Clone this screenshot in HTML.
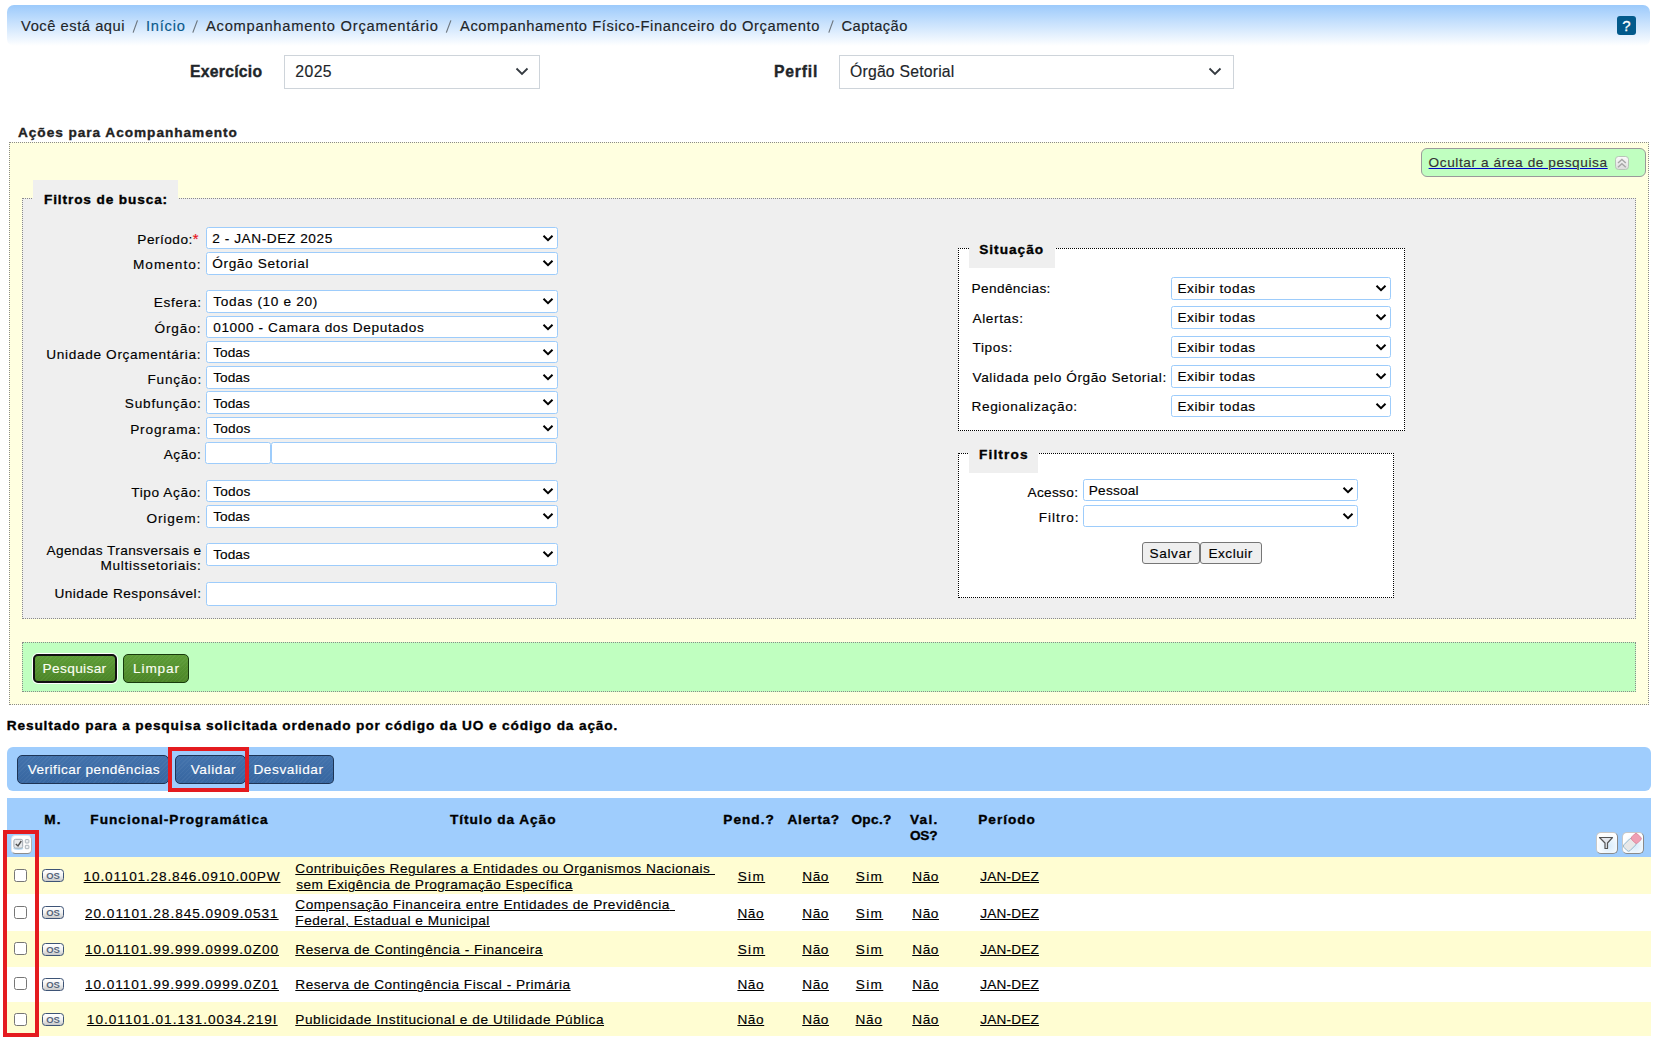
<!DOCTYPE html>
<html><head><meta charset="utf-8"><title>Captação</title>
<style>
svg{display:block}
html,body{margin:0;padding:0;width:1660px;height:1043px;overflow:hidden;background:#fff;font-family:"Liberation Sans",sans-serif}
.t{position:absolute;white-space:pre;line-height:1;font-family:"Liberation Sans",sans-serif;z-index:5}
.ul{position:absolute;height:1px;z-index:5}
.b{position:absolute;box-sizing:border-box}
.sel{position:absolute;box-sizing:border-box;background:#fff;border:1px solid #9dccfb;border-radius:2.5px}
.sel svg{position:absolute;right:4px;top:7px}
.fs{position:absolute;box-sizing:border-box;border:1px dotted #8a8a8a}
.cb{position:absolute;box-sizing:border-box;width:13px;height:13px;border:1px solid #767676;border-radius:2.5px;background:#fff;left:14px}
.os{position:absolute;box-sizing:border-box;width:22px;height:13px;left:42px;border:1px solid #3e5476;border-radius:3.5px;background:linear-gradient(#fff 0%,#f2f2f2 50%,#c9c9c9 100%);font:bold 9.5px/11px "Liberation Sans",sans-serif;color:#56657a;text-align:center;letter-spacing:0px}
.bbtn{position:absolute;box-sizing:border-box;border:1px solid #1d3455;border-radius:5px;background:repeating-linear-gradient(135deg,rgba(255,255,255,.04) 0 1px,rgba(0,0,0,0) 1px 3px),linear-gradient(#4373ad,#3766a0)}
.gbtn{position:absolute;box-sizing:border-box;border-radius:5px;background:repeating-linear-gradient(135deg,rgba(255,255,255,.04) 0 1px,rgba(0,0,0,0) 1px 3px),linear-gradient(#5e9e38,#4b8527)}
.wbtn{position:absolute;box-sizing:border-box;height:22px;top:542px;border:1px solid #767676;border-radius:3px;background:#efefef}
.row{position:absolute;left:7px;width:1644px}

</style></head><body>
<div class=b style='left:7px;top:5px;width:1643px;height:41px;border-radius:7px;background:linear-gradient(#9ccafb,#ffffff)'></div>
<svg style='position:absolute;left:0;top:0;z-index:5' width='900' height='40'><line x1='133.10000000000002' y1='32.6' x2='137.5' y2='20.4' stroke='#6c757d' stroke-width='1.15'/><line x1='192.8' y1='32.6' x2='197.39999999999998' y2='20.4' stroke='#6c757d' stroke-width='1.15'/><line x1='446.3' y1='32.6' x2='450.9' y2='20.4' stroke='#6c757d' stroke-width='1.15'/><line x1='828.8' y1='32.6' x2='833.2' y2='20.4' stroke='#6c757d' stroke-width='1.15'/></svg>
<div class=b style='left:1617px;top:16px;width:19px;height:19px;border-radius:3px;background:#035a8b;color:#fff;font:normal 15px/20px "Liberation Sans",sans-serif;text-align:center;-webkit-text-stroke:0.3px #fff'>?</div>
<div class=b style='left:284px;top:55px;width:256px;height:34px;border:1px solid #ced4da;background:#fff'><div style='position:absolute;left:230px;top:11px'><svg width='14' height='9' viewBox='0 0 14 9'><polyline points='1.5,1.5 7,7 12.5,1.5' fill='none' stroke='#343a40' stroke-width='1.8'/></svg></div></div>
<div class=b style='left:839px;top:55px;width:395px;height:34px;border:1px solid #ced4da;background:#fff'><div style='position:absolute;left:368px;top:11px'><svg width='14' height='9' viewBox='0 0 14 9'><polyline points='1.5,1.5 7,7 12.5,1.5' fill='none' stroke='#343a40' stroke-width='1.8'/></svg></div></div>
<div class=fs style='left:9px;top:142px;width:1640px;height:563px;background:#ffffe0'></div>
<div class=b style='left:1421px;top:148px;width:225px;height:29px;border:1px solid #9a9a9a;border-radius:6px;background:#c0ffc0'></div>
<div class=b style='left:1615px;top:156px;width:14px;height:14px;border:1px solid #b8c4b8;border-radius:3.5px;background:linear-gradient(#fafafa,#dcdcdc)'><svg width='12' height='12' viewBox='0 0 12 12' style='position:absolute;left:0;top:0'><polyline points='2,6 5.9,2.4 9.8,6' fill='none' stroke='#a6a6a6' stroke-width='1.4'/><polyline points='2,10.3 5.9,6.7 9.8,10.3' fill='none' stroke='#a6a6a6' stroke-width='1.4'/></svg></div>
<div class=fs style='left:22px;top:198px;width:1614px;height:421px;background:#efefef'></div>
<div class=b style='left:33px;top:180px;width:145px;height:25px;background:#efefef'></div>
<div class=sel style='left:206px;top:227px;width:352px;height:22px'><svg width='12' height='8' viewBox='-1 -1 12 8' style='position:absolute;left:335px;top:6px'><polyline points='0.5,0.8 5,5.2 9.5,0.8' fill='none' stroke='#000' stroke-width='2'/></svg></div>
<div class=sel style='left:206px;top:252px;width:352px;height:23px'><svg width='12' height='8' viewBox='-1 -1 12 8' style='position:absolute;left:335px;top:6px'><polyline points='0.5,0.8 5,5.2 9.5,0.8' fill='none' stroke='#000' stroke-width='2'/></svg></div>
<div class=sel style='left:206px;top:290px;width:352px;height:23px'><svg width='12' height='8' viewBox='-1 -1 12 8' style='position:absolute;left:335px;top:6px'><polyline points='0.5,0.8 5,5.2 9.5,0.8' fill='none' stroke='#000' stroke-width='2'/></svg></div>
<div class=sel style='left:206px;top:316px;width:352px;height:22px'><svg width='12' height='8' viewBox='-1 -1 12 8' style='position:absolute;left:335px;top:6px'><polyline points='0.5,0.8 5,5.2 9.5,0.8' fill='none' stroke='#000' stroke-width='2'/></svg></div>
<div class=sel style='left:206px;top:341px;width:352px;height:22px'><svg width='12' height='8' viewBox='-1 -1 12 8' style='position:absolute;left:335px;top:6px'><polyline points='0.5,0.8 5,5.2 9.5,0.8' fill='none' stroke='#000' stroke-width='2'/></svg></div>
<div class=sel style='left:206px;top:366px;width:352px;height:23px'><svg width='12' height='8' viewBox='-1 -1 12 8' style='position:absolute;left:335px;top:6px'><polyline points='0.5,0.8 5,5.2 9.5,0.8' fill='none' stroke='#000' stroke-width='2'/></svg></div>
<div class=sel style='left:206px;top:391px;width:352px;height:23px'><svg width='12' height='8' viewBox='-1 -1 12 8' style='position:absolute;left:335px;top:6px'><polyline points='0.5,0.8 5,5.2 9.5,0.8' fill='none' stroke='#000' stroke-width='2'/></svg></div>
<div class=sel style='left:206px;top:417px;width:352px;height:22px'><svg width='12' height='8' viewBox='-1 -1 12 8' style='position:absolute;left:335px;top:6px'><polyline points='0.5,0.8 5,5.2 9.5,0.8' fill='none' stroke='#000' stroke-width='2'/></svg></div>
<div class=sel style='left:206px;top:480px;width:352px;height:22px'><svg width='12' height='8' viewBox='-1 -1 12 8' style='position:absolute;left:335px;top:6px'><polyline points='0.5,0.8 5,5.2 9.5,0.8' fill='none' stroke='#000' stroke-width='2'/></svg></div>
<div class=sel style='left:206px;top:505px;width:352px;height:23px'><svg width='12' height='8' viewBox='-1 -1 12 8' style='position:absolute;left:335px;top:6px'><polyline points='0.5,0.8 5,5.2 9.5,0.8' fill='none' stroke='#000' stroke-width='2'/></svg></div>
<div class=sel style='left:206px;top:543px;width:352px;height:23px'><svg width='12' height='8' viewBox='-1 -1 12 8' style='position:absolute;left:335px;top:6px'><polyline points='0.5,0.8 5,5.2 9.5,0.8' fill='none' stroke='#000' stroke-width='2'/></svg></div>
<div class=sel style='left:205px;top:442px;width:66px;height:22px'></div>
<div class=sel style='left:271px;top:442px;width:286px;height:22px'></div>
<div class=sel style='left:206px;top:582px;width:351px;height:24px'></div>
<div class=fs style='left:958px;top:248px;width:447px;height:183px;background:#fff;border-color:#000'></div>
<div class=b style='left:969px;top:238px;width:86px;height:30px;background:#efefef'></div>
<div class=sel style='left:1171px;top:277px;width:220px;height:23px'><svg width='12' height='8' viewBox='-1 -1 12 8' style='position:absolute;left:203px;top:6px'><polyline points='0.5,0.8 5,5.2 9.5,0.8' fill='none' stroke='#000' stroke-width='2'/></svg></div>
<div class=sel style='left:1171px;top:306px;width:220px;height:23px'><svg width='12' height='8' viewBox='-1 -1 12 8' style='position:absolute;left:203px;top:6px'><polyline points='0.5,0.8 5,5.2 9.5,0.8' fill='none' stroke='#000' stroke-width='2'/></svg></div>
<div class=sel style='left:1171px;top:336px;width:220px;height:22px'><svg width='12' height='8' viewBox='-1 -1 12 8' style='position:absolute;left:203px;top:6px'><polyline points='0.5,0.8 5,5.2 9.5,0.8' fill='none' stroke='#000' stroke-width='2'/></svg></div>
<div class=sel style='left:1171px;top:365px;width:220px;height:23px'><svg width='12' height='8' viewBox='-1 -1 12 8' style='position:absolute;left:203px;top:6px'><polyline points='0.5,0.8 5,5.2 9.5,0.8' fill='none' stroke='#000' stroke-width='2'/></svg></div>
<div class=sel style='left:1171px;top:395px;width:220px;height:22px'><svg width='12' height='8' viewBox='-1 -1 12 8' style='position:absolute;left:203px;top:6px'><polyline points='0.5,0.8 5,5.2 9.5,0.8' fill='none' stroke='#000' stroke-width='2'/></svg></div>
<div class=fs style='left:958px;top:453px;width:436px;height:145px;background:#fff;border-color:#000'></div>
<div class=b style='left:969px;top:443px;width:69px;height:30px;background:#efefef'></div>
<div class=sel style='left:1083px;top:479px;width:275px;height:22px'><svg width='12' height='8' viewBox='-1 -1 12 8' style='position:absolute;left:258px;top:6px'><polyline points='0.5,0.8 5,5.2 9.5,0.8' fill='none' stroke='#000' stroke-width='2'/></svg></div>
<div class=sel style='left:1083px;top:505px;width:275px;height:22px'><svg width='12' height='8' viewBox='-1 -1 12 8' style='position:absolute;left:258px;top:6px'><polyline points='0.5,0.8 5,5.2 9.5,0.8' fill='none' stroke='#000' stroke-width='2'/></svg></div>
<div class=wbtn style='left:1142px;width:58px'></div>
<div class=wbtn style='left:1200px;width:62px'></div>
<div class=fs style='left:22px;top:642px;width:1614px;height:50px;background:#c0ffc0'></div>
<div class=gbtn style='left:33px;top:654px;width:84px;height:29px;border:2px solid #111;box-shadow:0 0 0 1px #fff'></div>
<div class=gbtn style='left:123px;top:654px;width:66px;height:29px;border:1px solid #173a0c'></div>
<div class=b style='left:7px;top:747px;width:1644px;height:44px;border-radius:6px;background:#9fcdfd'></div>
<div class=bbtn style='left:17px;top:755px;width:152px;height:29px'></div>
<div class=bbtn style='left:175px;top:755px;width:71px;height:29px'></div>
<div class=bbtn style='left:245px;top:755px;width:89px;height:29px;border-left:none;border-top-left-radius:0;border-bottom-left-radius:0'></div>
<div class=b style='left:168px;top:747px;width:81px;height:45px;border:4px solid #e41b1f;z-index:6'></div>
<div class=b style='left:7px;top:798px;width:1644px;height:59px;background:#9fcdfd'></div>
<div class=row style='top:857px;height:36.7px;background:#fffdd2'></div>
<div class=row style='top:893.7px;height:37.3px;background:#ffffff'></div>
<div class=row style='top:931px;height:35.7px;background:#fffdd2'></div>
<div class=row style='top:966.7px;height:35.1px;background:#ffffff'></div>
<div class=row style='top:1001.8px;height:34.7px;background:#fffdd2'></div>
<div class=cb style='top:868.7px'></div>
<div class=cb style='top:905.7px'></div>
<div class=cb style='top:942px'></div>
<div class=cb style='top:977px'></div>
<div class=cb style='top:1012.7px'></div>
<div class=os style='top:869px'>OS</div>
<div class=os style='top:906px'>OS</div>
<div class=os style='top:942.5px'>OS</div>
<div class=os style='top:977.5px'>OS</div>
<div class=os style='top:1013px'>OS</div>
<div class=b style='left:3px;top:830px;width:36px;height:207px;border:4px solid #e41b1f;z-index:6'></div>
<div class=b style='left:10.5px;top:834.5px;width:21px;height:19px;border-radius:4.5px;background:#fff;border:1px solid #e2e6ea;border-bottom:1.5px solid #8d8d8d;border-right-color:#b0b0b0'><svg width='19' height='17' viewBox='0 0 19 17' style='position:absolute;left:0;top:0'><ellipse cx='6.3' cy='12.3' rx='5' ry='1.6' fill='#bcdcf4'/><rect x='1.9' y='3.3' width='8.8' height='8.8' rx='1.6' fill='#e6e9ec' stroke='#a3abb2' stroke-width='1'/><polyline points='3.8,8 6,10 9.3,5' fill='none' stroke='#505050' stroke-width='1.4'/><rect x='13.3' y='3.6' width='3.6' height='3.4' rx='0.6' fill='#eef1f4' stroke='#a3abb2' stroke-width='0.9'/><rect x='13.3' y='9.3' width='3.6' height='3.4' rx='0.6' fill='#eef1f4' stroke='#a3abb2' stroke-width='0.9'/></svg></div>
<div class=b style='left:1596px;top:832px;width:21.5px;height:21.5px;border-radius:5px;background:radial-gradient(circle at 60% 65%,#d8ecfb,#fff 70%);border:1px solid #c8c8c8;border-right-color:#8a8a8a;border-bottom-color:#8a8a8a'><svg width='19' height='19' viewBox='0 0 19 19' style='position:absolute;left:0;top:0'><path d='M2.5 4.5 H15.5 L10.5 10 V15.5 H8 V10 Z' fill='#e4e8ee' stroke='#555' stroke-width='1.2' stroke-linejoin='round'/></svg></div>
<div class=b style='left:1622px;top:832px;width:21.5px;height:21.5px;border-radius:5px;background:radial-gradient(circle at 60% 65%,#d8ecfb,#fff 70%);border:1px solid #c8c8c8;border-right-color:#8a8a8a;border-bottom-color:#8a8a8a'><svg width='19' height='19' viewBox='0 0 19 19' style='position:absolute;left:0;top:0'><g transform='rotate(-45 9.5 9.5)'><rect x='0' y='5' width='12' height='8.5' rx='2' fill='#e8e8e8' stroke='#8fb4cc' stroke-width='0.9'/><rect x='11' y='5' width='8' height='8.5' rx='2' fill='#ef9fb3' stroke='#d9839a' stroke-width='0.8'/></g></svg></div>
<span class=t style='left:21.10px;top:19px;font-size:14.7px;font-weight:400;letter-spacing:0.546px;color:#212529;-webkit-text-stroke:0.15px #212529'>Você está aqui</span>
<span class=t style='left:146.00px;top:19px;font-size:14.7px;font-weight:400;letter-spacing:0.740px;color:#0a5a8c;-webkit-text-stroke:0.15px #0a5a8c'>Início</span>
<span class=t style='left:206.00px;top:19px;font-size:14.7px;font-weight:400;letter-spacing:0.754px;color:#212529;-webkit-text-stroke:0.15px #212529'>Acompanhamento Orçamentário</span>
<span class=t style='left:460.00px;top:19px;font-size:14.7px;font-weight:400;letter-spacing:0.600px;color:#212529;-webkit-text-stroke:0.15px #212529'>Acompanhamento Físico-Financeiro do Orçamento</span>
<span class=t style='left:841.50px;top:19px;font-size:14.7px;font-weight:400;letter-spacing:0.429px;color:#212529;-webkit-text-stroke:0.15px #212529'>Captação</span>
<span class=t style='left:190.00px;top:64px;font-size:15.75px;font-weight:700;letter-spacing:0.250px;color:#212529;-webkit-text-stroke:0.35px #212529'>Exercício</span>
<span class=t style='left:295.30px;top:64px;font-size:15.75px;font-weight:400;letter-spacing:0.433px;color:#212529;-webkit-text-stroke:0.15px #212529'>2025</span>
<span class=t style='left:774.00px;top:64px;font-size:15.75px;font-weight:700;letter-spacing:0.800px;color:#212529;-webkit-text-stroke:0.35px #212529'>Perfil</span>
<span class=t style='left:850.00px;top:64px;font-size:15.75px;font-weight:400;letter-spacing:0.215px;color:#212529;-webkit-text-stroke:0.15px #212529'>Órgão Setorial</span>
<span class=t style='left:18.00px;top:126px;font-size:13.65px;font-weight:700;letter-spacing:0.958px;color:#222;-webkit-text-stroke:0.35px #222'>Ações para Acompanhamento</span>
<span class=t style='left:1428.60px;top:156px;font-size:13.65px;font-weight:400;letter-spacing:0.588px;color:#333;-webkit-text-stroke:0.15px #333;text-decoration:underline;text-decoration-color:#0000cc;text-underline-offset:1px;text-decoration-thickness:1px'>Ocultar a área de pesquisa</span>
<span class=t style='left:44.00px;top:193px;font-size:13.65px;font-weight:700;letter-spacing:0.875px;color:#000;-webkit-text-stroke:0.35px #000'>Filtros de busca:</span>
<span class=t style='left:137.30px;top:233px;font-size:13.65px;font-weight:400;letter-spacing:0.486px;color:#000;-webkit-text-stroke:0.15px #000'>Período:</span>
<span class=t style='left:133.00px;top:258px;font-size:13.65px;font-weight:400;letter-spacing:0.986px;color:#000;-webkit-text-stroke:0.15px #000'>Momento:</span>
<span class=t style='left:153.70px;top:296px;font-size:13.65px;font-weight:400;letter-spacing:0.700px;color:#000;-webkit-text-stroke:0.15px #000'>Esfera:</span>
<span class=t style='left:154.40px;top:322px;font-size:13.65px;font-weight:400;letter-spacing:0.900px;color:#000;-webkit-text-stroke:0.15px #000'>Órgão:</span>
<span class=t style='left:46.20px;top:348px;font-size:13.65px;font-weight:400;letter-spacing:0.665px;color:#000;-webkit-text-stroke:0.15px #000'>Unidade Orçamentária:</span>
<span class=t style='left:147.50px;top:373px;font-size:13.65px;font-weight:400;letter-spacing:0.733px;color:#000;-webkit-text-stroke:0.15px #000'>Função:</span>
<span class=t style='left:124.80px;top:397px;font-size:13.65px;font-weight:400;letter-spacing:0.789px;color:#000;-webkit-text-stroke:0.15px #000'>Subfunção:</span>
<span class=t style='left:130.20px;top:423px;font-size:13.65px;font-weight:400;letter-spacing:0.838px;color:#000;-webkit-text-stroke:0.15px #000'>Programa:</span>
<span class=t style='left:163.70px;top:448px;font-size:13.65px;font-weight:400;letter-spacing:0.550px;color:#000;-webkit-text-stroke:0.15px #000'>Ação:</span>
<span class=t style='left:131.30px;top:486px;font-size:13.65px;font-weight:400;letter-spacing:0.600px;color:#000;-webkit-text-stroke:0.15px #000'>Tipo Ação:</span>
<span class=t style='left:146.40px;top:512px;font-size:13.65px;font-weight:400;letter-spacing:0.883px;color:#000;-webkit-text-stroke:0.15px #000'>Origem:</span>
<span class=t style='left:46.40px;top:544px;font-size:13.65px;font-weight:400;letter-spacing:0.400px;color:#000;-webkit-text-stroke:0.15px #000'>Agendas Transversais e</span>
<span class=t style='left:100.50px;top:559px;font-size:13.65px;font-weight:400;letter-spacing:0.680px;color:#000;-webkit-text-stroke:0.15px #000'>Multissetoriais:</span>
<span class=t style='left:54.40px;top:587px;font-size:13.65px;font-weight:400;letter-spacing:0.489px;color:#000;-webkit-text-stroke:0.15px #000'>Unidade Responsável:</span>
<span class=t style='left:192.70px;top:232px;font-size:14.7px;font-weight:400;letter-spacing:0.661px;color:#e8141c;-webkit-text-stroke:0.15px #e8141c'>*</span>
<span class=t style='left:212.20px;top:232px;font-size:13.65px;font-weight:400;letter-spacing:0.573px;color:#000;-webkit-text-stroke:0.15px #000'>2 - JAN-DEZ 2025</span>
<span class=t style='left:212.20px;top:257px;font-size:13.65px;font-weight:400;letter-spacing:0.646px;color:#000;-webkit-text-stroke:0.15px #000'>Órgão Setorial</span>
<span class=t style='left:213.20px;top:295px;font-size:13.65px;font-weight:400;letter-spacing:0.671px;color:#000;-webkit-text-stroke:0.15px #000'>Todas (10 e 20)</span>
<span class=t style='left:213.20px;top:321px;font-size:13.65px;font-weight:400;letter-spacing:0.607px;color:#000;-webkit-text-stroke:0.15px #000'>01000 - Camara dos Deputados</span>
<span class=t style='left:213.20px;top:346px;font-size:13.65px;font-weight:400;letter-spacing:0.050px;color:#000;-webkit-text-stroke:0.15px #000'>Todas</span>
<span class=t style='left:213.20px;top:371px;font-size:13.65px;font-weight:400;letter-spacing:0.050px;color:#000;-webkit-text-stroke:0.15px #000'>Todas</span>
<span class=t style='left:213.20px;top:397px;font-size:13.65px;font-weight:400;letter-spacing:0.050px;color:#000;-webkit-text-stroke:0.15px #000'>Todas</span>
<span class=t style='left:213.20px;top:422px;font-size:13.65px;font-weight:400;letter-spacing:0.200px;color:#000;-webkit-text-stroke:0.15px #000'>Todos</span>
<span class=t style='left:213.20px;top:485px;font-size:13.65px;font-weight:400;letter-spacing:0.200px;color:#000;-webkit-text-stroke:0.15px #000'>Todos</span>
<span class=t style='left:213.20px;top:510px;font-size:13.65px;font-weight:400;letter-spacing:0.050px;color:#000;-webkit-text-stroke:0.15px #000'>Todas</span>
<span class=t style='left:213.20px;top:548px;font-size:13.65px;font-weight:400;letter-spacing:0.050px;color:#000;-webkit-text-stroke:0.15px #000'>Todas</span>
<span class=t style='left:979.20px;top:243px;font-size:13.65px;font-weight:700;letter-spacing:1.014px;color:#000;-webkit-text-stroke:0.35px #000'>Situação</span>
<span class=t style='left:971.50px;top:282px;font-size:13.65px;font-weight:400;letter-spacing:0.380px;color:#000;-webkit-text-stroke:0.15px #000'>Pendências:</span>
<span class=t style='left:972.50px;top:312px;font-size:13.65px;font-weight:400;letter-spacing:0.614px;color:#000;-webkit-text-stroke:0.15px #000'>Alertas:</span>
<span class=t style='left:972.50px;top:341px;font-size:13.65px;font-weight:400;letter-spacing:0.614px;color:#000;-webkit-text-stroke:0.15px #000'>Tipos:</span>
<span class=t style='left:972.50px;top:371px;font-size:13.65px;font-weight:400;letter-spacing:0.589px;color:#000;-webkit-text-stroke:0.15px #000'>Validada pelo Órgão Setorial:</span>
<span class=t style='left:971.50px;top:400px;font-size:13.65px;font-weight:400;letter-spacing:0.614px;color:#000;-webkit-text-stroke:0.15px #000'>Regionalização:</span>
<span class=t style='left:1177.40px;top:282px;font-size:13.65px;font-weight:400;letter-spacing:0.591px;color:#000;-webkit-text-stroke:0.15px #000'>Exibir todas</span>
<span class=t style='left:1177.40px;top:311px;font-size:13.65px;font-weight:400;letter-spacing:0.591px;color:#000;-webkit-text-stroke:0.15px #000'>Exibir todas</span>
<span class=t style='left:1177.40px;top:341px;font-size:13.65px;font-weight:400;letter-spacing:0.591px;color:#000;-webkit-text-stroke:0.15px #000'>Exibir todas</span>
<span class=t style='left:1177.40px;top:370px;font-size:13.65px;font-weight:400;letter-spacing:0.591px;color:#000;-webkit-text-stroke:0.15px #000'>Exibir todas</span>
<span class=t style='left:1177.40px;top:400px;font-size:13.65px;font-weight:400;letter-spacing:0.591px;color:#000;-webkit-text-stroke:0.15px #000'>Exibir todas</span>
<span class=t style='left:979.00px;top:448px;font-size:13.65px;font-weight:700;letter-spacing:1.133px;color:#000;-webkit-text-stroke:0.35px #000'>Filtros</span>
<span class=t style='left:1027.60px;top:486px;font-size:13.65px;font-weight:400;letter-spacing:0.300px;color:#000;-webkit-text-stroke:0.15px #000'>Acesso:</span>
<span class=t style='left:1038.80px;top:511px;font-size:13.65px;font-weight:400;letter-spacing:0.933px;color:#000;-webkit-text-stroke:0.15px #000'>Filtro:</span>
<span class=t style='left:1088.80px;top:484px;font-size:13.65px;font-weight:400;letter-spacing:0.200px;color:#000;-webkit-text-stroke:0.15px #000'>Pessoal</span>
<span class=t style='left:1149.50px;top:547px;font-size:13.65px;font-weight:400;letter-spacing:0.620px;color:#000;-webkit-text-stroke:0.15px #000'>Salvar</span>
<span class=t style='left:1208.50px;top:547px;font-size:13.65px;font-weight:400;letter-spacing:0.467px;color:#000;-webkit-text-stroke:0.15px #000'>Excluir</span>
<span class=t style='left:42.60px;top:662px;font-size:13.65px;font-weight:400;letter-spacing:0.362px;color:#fbfff2;-webkit-text-stroke:0.15px #fbfff2'>Pesquisar</span>
<span class=t style='left:133.00px;top:662px;font-size:13.65px;font-weight:400;letter-spacing:0.880px;color:#fbfff2;-webkit-text-stroke:0.15px #fbfff2'>Limpar</span>
<span class=t style='left:6.80px;top:719px;font-size:13.65px;font-weight:700;letter-spacing:0.868px;color:#000;-webkit-text-stroke:0.35px #000'>Resultado para a pesquisa solicitada ordenado por código da UO e código da ação.</span>
<span class=t style='left:27.70px;top:763px;font-size:13.65px;font-weight:400;letter-spacing:0.479px;color:#fff;-webkit-text-stroke:0.15px #fff'>Verificar pendências</span>
<span class=t style='left:190.70px;top:763px;font-size:13.65px;font-weight:400;letter-spacing:0.583px;color:#fff;-webkit-text-stroke:0.15px #fff'>Validar</span>
<span class=t style='left:253.40px;top:763px;font-size:13.65px;font-weight:400;letter-spacing:0.578px;color:#fff;-webkit-text-stroke:0.15px #fff'>Desvalidar</span>
<span class=t style='left:44.20px;top:813px;font-size:13.65px;font-weight:700;letter-spacing:1.200px;color:#000;-webkit-text-stroke:0.35px #000'>M.</span>
<span class=t style='left:90.30px;top:813px;font-size:13.65px;font-weight:700;letter-spacing:1.010px;color:#000;-webkit-text-stroke:0.35px #000'>Funcional-Programática</span>
<span class=t style='left:450.00px;top:813px;font-size:13.65px;font-weight:700;letter-spacing:0.923px;color:#000;-webkit-text-stroke:0.35px #000'>Título da Ação</span>
<span class=t style='left:723.30px;top:813px;font-size:13.65px;font-weight:700;letter-spacing:1.000px;color:#000;-webkit-text-stroke:0.35px #000'>Pend.?</span>
<span class=t style='left:787.40px;top:813px;font-size:13.65px;font-weight:700;letter-spacing:0.800px;color:#000;-webkit-text-stroke:0.35px #000'>Alerta?</span>
<span class=t style='left:851.40px;top:813px;font-size:13.65px;font-weight:700;letter-spacing:0.350px;color:#000;-webkit-text-stroke:0.35px #000'>Opc.?</span>
<span class=t style='left:910.00px;top:813px;font-size:13.65px;font-weight:700;letter-spacing:1.267px;color:#000;-webkit-text-stroke:0.35px #000'>Val.</span>
<span class=t style='left:910.00px;top:829px;font-size:13.65px;font-weight:700;letter-spacing:-0.250px;color:#000;-webkit-text-stroke:0.35px #000'>OS?</span>
<span class=t style='left:978.30px;top:813px;font-size:13.65px;font-weight:700;letter-spacing:0.950px;color:#000;-webkit-text-stroke:0.35px #000'>Período</span>
<span class=t style='left:83.60px;top:870px;font-size:13.65px;font-weight:400;letter-spacing:0.817px;color:#000;-webkit-text-stroke:0.15px #000;text-decoration:underline;text-decoration-color:#000;text-underline-offset:1px;text-decoration-thickness:1px'>10.01101.28.846.0910.00PW</span>
<span class=t style='left:295.30px;top:862px;font-size:13.65px;font-weight:400;letter-spacing:0.507px;color:#000;-webkit-text-stroke:0.15px #000;text-decoration:underline;text-decoration-color:#000;text-underline-offset:1px;text-decoration-thickness:1px'>Contribuições Regulares a Entidades ou Organismos Nacionais</span><div class=ul style='left:709.7px;top:874px;width:5.6px;background:#000'></div>
<span class=t style='left:296.30px;top:878px;font-size:13.65px;font-weight:400;letter-spacing:0.418px;color:#000;-webkit-text-stroke:0.15px #000;text-decoration:underline;text-decoration-color:#000;text-underline-offset:1px;text-decoration-thickness:1px'>sem Exigência de Programação Específica</span>
<span class=t style='left:737.65px;top:870px;font-size:13.65px;font-weight:400;letter-spacing:1.350px;color:#000;-webkit-text-stroke:0.15px #000;text-decoration:underline;text-decoration-color:#000;text-underline-offset:1px;text-decoration-thickness:1px'>Sim</span>
<span class=t style='left:802.20px;top:870px;font-size:13.65px;font-weight:400;letter-spacing:0.600px;color:#000;-webkit-text-stroke:0.15px #000;text-decoration:underline;text-decoration-color:#000;text-underline-offset:1px;text-decoration-thickness:1px'>Não</span>
<span class=t style='left:855.75px;top:870px;font-size:13.65px;font-weight:400;letter-spacing:1.350px;color:#000;-webkit-text-stroke:0.15px #000;text-decoration:underline;text-decoration-color:#000;text-underline-offset:1px;text-decoration-thickness:1px'>Sim</span>
<span class=t style='left:912.20px;top:870px;font-size:13.65px;font-weight:400;letter-spacing:0.600px;color:#000;-webkit-text-stroke:0.15px #000;text-decoration:underline;text-decoration-color:#000;text-underline-offset:1px;text-decoration-thickness:1px'>Não</span>
<span class=t style='left:980.15px;top:870px;font-size:13.65px;font-weight:400;letter-spacing:0.183px;color:#000;-webkit-text-stroke:0.15px #000;text-decoration:underline;text-decoration-color:#000;text-underline-offset:1px;text-decoration-thickness:1px'>JAN-DEZ</span>
<span class=t style='left:85.00px;top:907px;font-size:13.65px;font-weight:400;letter-spacing:0.958px;color:#000;-webkit-text-stroke:0.15px #000;text-decoration:underline;text-decoration-color:#000;text-underline-offset:1px;text-decoration-thickness:1px'>20.01101.28.845.0909.0531</span>
<span class=t style='left:295.30px;top:898px;font-size:13.65px;font-weight:400;letter-spacing:0.485px;color:#000;-webkit-text-stroke:0.15px #000;text-decoration:underline;text-decoration-color:#000;text-underline-offset:1px;text-decoration-thickness:1px'>Compensação Financeira entre Entidades de Previdência</span><div class=ul style='left:669.5px;top:910px;width:5.6px;background:#000'></div>
<span class=t style='left:295.30px;top:914px;font-size:13.65px;font-weight:400;letter-spacing:0.514px;color:#000;-webkit-text-stroke:0.15px #000;text-decoration:underline;text-decoration-color:#000;text-underline-offset:1px;text-decoration-thickness:1px'>Federal, Estadual e Municipal</span>
<span class=t style='left:737.40px;top:907px;font-size:13.65px;font-weight:400;letter-spacing:0.600px;color:#000;-webkit-text-stroke:0.15px #000;text-decoration:underline;text-decoration-color:#000;text-underline-offset:1px;text-decoration-thickness:1px'>Não</span>
<span class=t style='left:802.20px;top:907px;font-size:13.65px;font-weight:400;letter-spacing:0.600px;color:#000;-webkit-text-stroke:0.15px #000;text-decoration:underline;text-decoration-color:#000;text-underline-offset:1px;text-decoration-thickness:1px'>Não</span>
<span class=t style='left:855.75px;top:907px;font-size:13.65px;font-weight:400;letter-spacing:1.350px;color:#000;-webkit-text-stroke:0.15px #000;text-decoration:underline;text-decoration-color:#000;text-underline-offset:1px;text-decoration-thickness:1px'>Sim</span>
<span class=t style='left:912.20px;top:907px;font-size:13.65px;font-weight:400;letter-spacing:0.600px;color:#000;-webkit-text-stroke:0.15px #000;text-decoration:underline;text-decoration-color:#000;text-underline-offset:1px;text-decoration-thickness:1px'>Não</span>
<span class=t style='left:980.15px;top:907px;font-size:13.65px;font-weight:400;letter-spacing:0.183px;color:#000;-webkit-text-stroke:0.15px #000;text-decoration:underline;text-decoration-color:#000;text-underline-offset:1px;text-decoration-thickness:1px'>JAN-DEZ</span>
<span class=t style='left:85.00px;top:943px;font-size:13.65px;font-weight:400;letter-spacing:0.942px;color:#000;-webkit-text-stroke:0.15px #000;text-decoration:underline;text-decoration-color:#000;text-underline-offset:1px;text-decoration-thickness:1px'>10.01101.99.999.0999.0Z00</span>
<span class=t style='left:295.30px;top:943px;font-size:13.65px;font-weight:400;letter-spacing:0.517px;color:#000;-webkit-text-stroke:0.15px #000;text-decoration:underline;text-decoration-color:#000;text-underline-offset:1px;text-decoration-thickness:1px'>Reserva de Contingência - Financeira</span>
<span class=t style='left:737.65px;top:943px;font-size:13.65px;font-weight:400;letter-spacing:1.350px;color:#000;-webkit-text-stroke:0.15px #000;text-decoration:underline;text-decoration-color:#000;text-underline-offset:1px;text-decoration-thickness:1px'>Sim</span>
<span class=t style='left:802.20px;top:943px;font-size:13.65px;font-weight:400;letter-spacing:0.600px;color:#000;-webkit-text-stroke:0.15px #000;text-decoration:underline;text-decoration-color:#000;text-underline-offset:1px;text-decoration-thickness:1px'>Não</span>
<span class=t style='left:855.75px;top:943px;font-size:13.65px;font-weight:400;letter-spacing:1.350px;color:#000;-webkit-text-stroke:0.15px #000;text-decoration:underline;text-decoration-color:#000;text-underline-offset:1px;text-decoration-thickness:1px'>Sim</span>
<span class=t style='left:912.20px;top:943px;font-size:13.65px;font-weight:400;letter-spacing:0.600px;color:#000;-webkit-text-stroke:0.15px #000;text-decoration:underline;text-decoration-color:#000;text-underline-offset:1px;text-decoration-thickness:1px'>Não</span>
<span class=t style='left:980.15px;top:943px;font-size:13.65px;font-weight:400;letter-spacing:0.183px;color:#000;-webkit-text-stroke:0.15px #000;text-decoration:underline;text-decoration-color:#000;text-underline-offset:1px;text-decoration-thickness:1px'>JAN-DEZ</span>
<span class=t style='left:85.00px;top:978px;font-size:13.65px;font-weight:400;letter-spacing:0.942px;color:#000;-webkit-text-stroke:0.15px #000;text-decoration:underline;text-decoration-color:#000;text-underline-offset:1px;text-decoration-thickness:1px'>10.01101.99.999.0999.0Z01</span>
<span class=t style='left:295.30px;top:978px;font-size:13.65px;font-weight:400;letter-spacing:0.483px;color:#000;-webkit-text-stroke:0.15px #000;text-decoration:underline;text-decoration-color:#000;text-underline-offset:1px;text-decoration-thickness:1px'>Reserva de Contingência Fiscal - Primária</span>
<span class=t style='left:737.40px;top:978px;font-size:13.65px;font-weight:400;letter-spacing:0.600px;color:#000;-webkit-text-stroke:0.15px #000;text-decoration:underline;text-decoration-color:#000;text-underline-offset:1px;text-decoration-thickness:1px'>Não</span>
<span class=t style='left:802.20px;top:978px;font-size:13.65px;font-weight:400;letter-spacing:0.600px;color:#000;-webkit-text-stroke:0.15px #000;text-decoration:underline;text-decoration-color:#000;text-underline-offset:1px;text-decoration-thickness:1px'>Não</span>
<span class=t style='left:855.75px;top:978px;font-size:13.65px;font-weight:400;letter-spacing:1.350px;color:#000;-webkit-text-stroke:0.15px #000;text-decoration:underline;text-decoration-color:#000;text-underline-offset:1px;text-decoration-thickness:1px'>Sim</span>
<span class=t style='left:912.20px;top:978px;font-size:13.65px;font-weight:400;letter-spacing:0.600px;color:#000;-webkit-text-stroke:0.15px #000;text-decoration:underline;text-decoration-color:#000;text-underline-offset:1px;text-decoration-thickness:1px'>Não</span>
<span class=t style='left:980.15px;top:978px;font-size:13.65px;font-weight:400;letter-spacing:0.183px;color:#000;-webkit-text-stroke:0.15px #000;text-decoration:underline;text-decoration-color:#000;text-underline-offset:1px;text-decoration-thickness:1px'>JAN-DEZ</span>
<span class=t style='left:86.80px;top:1013px;font-size:13.65px;font-weight:400;letter-spacing:1.000px;color:#000;-webkit-text-stroke:0.15px #000;text-decoration:underline;text-decoration-color:#000;text-underline-offset:1px;text-decoration-thickness:1px'>10.01101.01.131.0034.219I</span>
<span class=t style='left:295.30px;top:1013px;font-size:13.65px;font-weight:400;letter-spacing:0.555px;color:#000;-webkit-text-stroke:0.15px #000;text-decoration:underline;text-decoration-color:#000;text-underline-offset:1px;text-decoration-thickness:1px'>Publicidade Institucional e de Utilidade Pública</span>
<span class=t style='left:737.40px;top:1013px;font-size:13.65px;font-weight:400;letter-spacing:0.600px;color:#000;-webkit-text-stroke:0.15px #000;text-decoration:underline;text-decoration-color:#000;text-underline-offset:1px;text-decoration-thickness:1px'>Não</span>
<span class=t style='left:802.20px;top:1013px;font-size:13.65px;font-weight:400;letter-spacing:0.600px;color:#000;-webkit-text-stroke:0.15px #000;text-decoration:underline;text-decoration-color:#000;text-underline-offset:1px;text-decoration-thickness:1px'>Não</span>
<span class=t style='left:855.50px;top:1013px;font-size:13.65px;font-weight:400;letter-spacing:0.600px;color:#000;-webkit-text-stroke:0.15px #000;text-decoration:underline;text-decoration-color:#000;text-underline-offset:1px;text-decoration-thickness:1px'>Não</span>
<span class=t style='left:912.20px;top:1013px;font-size:13.65px;font-weight:400;letter-spacing:0.600px;color:#000;-webkit-text-stroke:0.15px #000;text-decoration:underline;text-decoration-color:#000;text-underline-offset:1px;text-decoration-thickness:1px'>Não</span>
<span class=t style='left:980.15px;top:1013px;font-size:13.65px;font-weight:400;letter-spacing:0.183px;color:#000;-webkit-text-stroke:0.15px #000;text-decoration:underline;text-decoration-color:#000;text-underline-offset:1px;text-decoration-thickness:1px'>JAN-DEZ</span>
</body></html>
